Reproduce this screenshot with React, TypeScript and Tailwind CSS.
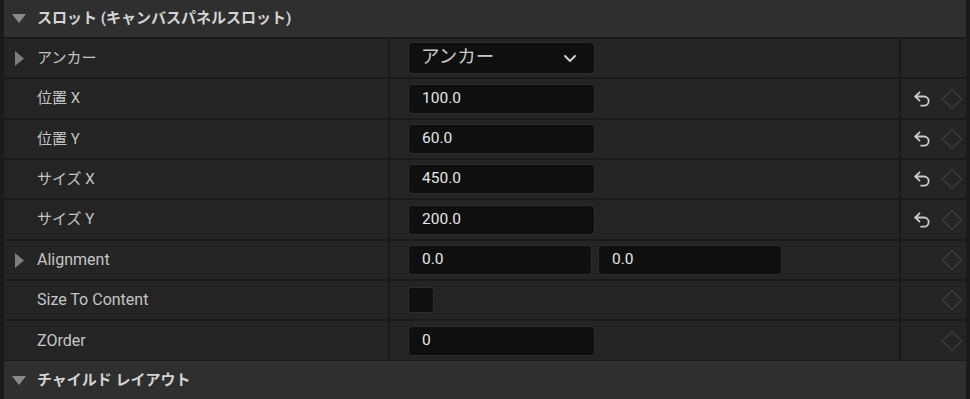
import React from "react";

const font = { fontFamily: "Roboto, 'Noto Sans CJK JP', sans-serif" };

function Undo() {
  return (
    <svg width="20" height="20" viewBox="0 0 24 24" fill="none" stroke="#c9c9c9" strokeWidth="2.2" strokeLinecap="round" strokeLinejoin="round">
      <path d="M9 14 4 9l5-5" />
      <path d="M4 9h10.5a5.5 5.5 0 0 1 5.5 5.5a5.5 5.5 0 0 1-5.5 5.5H11" />
    </svg>
  );
}

function Diamond() {
  return (
    <svg width="22" height="22" viewBox="0 0 22 22" fill="none">
      <path d="M11 1.5 20.5 11 11 20.5 1.5 11Z" stroke="#3b3b3b" strokeWidth="1.4" />
    </svg>
  );
}

function TriRight() {
  return (
    <svg width="10" height="15" viewBox="0 0 10 15">
      <path d="M0 0 L9 7.5 L0 15 Z" fill="#7d7d7d" />
    </svg>
  );
}

function TriDown() {
  return (
    <svg width="14" height="9" viewBox="0 0 14 9">
      <path d="M0 0 L14 0 L7 9 Z" fill="#8a8a8a" />
    </svg>
  );
}

function Input({ value, w = "w-[187px]" }: { value: string; w?: string }) {
  return (
    <div className={`${w} h-[30px] rounded-[4px] bg-[#0f0f0f] border border-[#2c2c2c] flex items-center pl-[13px] text-[15.5px] text-[#e6e6e6]`}>
      {value}
    </div>
  );
}

type Row = {
  label: string;
  size: string;
  h: string;
  expand?: boolean;
  value: React.ReactNode;
  undo?: boolean;
  diamond?: boolean;
};

export default function App() {
  const rows: Row[] = [
    {
      label: "アンカー",
      size: "text-[15px]",
      h: "h-[38px]",
      expand: true,
      value: (
        <div className="w-[187px] h-[32px] rounded-[5px] bg-[#0f0f0f] border border-[#2c2c2c] flex items-center justify-between pl-[12px] pr-[17px] text-[18.5px] text-[#c8c8c8]">
          <span>アンカー</span>
          <svg width="14" height="9" viewBox="0 0 14 9" fill="none" stroke="#cfcfcf" strokeWidth="2" strokeLinecap="round" strokeLinejoin="round">
            <path d="M2 2 7 7 12 2" />
          </svg>
        </div>
      ),
    },
    { label: "位置 X", size: "text-[15px]", h: "h-[39px]", value: <Input value="100.0" />, undo: true, diamond: true },
    { label: "位置 Y", size: "text-[15px]", h: "h-[38px]", value: <Input value="60.0" />, undo: true, diamond: true },
    { label: "サイズ X", size: "text-[15px]", h: "h-[38px]", value: <Input value="450.0" />, undo: true, diamond: true },
    { label: "サイズ Y", size: "text-[15px]", h: "h-[39px]", value: <Input value="200.0" />, undo: true, diamond: true },
    {
      label: "Alignment",
      size: "text-[16px]",
      h: "h-[38px]",
      expand: true,
      value: (
        <div className="flex gap-[6px]">
          <Input value="0.0" w="w-[184px]" />
          <Input value="0.0" w="w-[184px]" />
        </div>
      ),
      diamond: true,
    },
    {
      label: "Size To Content",
      size: "text-[16px]",
      h: "h-[38px]",
      value: <div className="w-[26px] h-[26px] rounded-[3px] bg-[#0f0f0f] border border-[#2c2c2c]" />,
      diamond: true,
    },
    { label: "ZOrder", size: "text-[16px]", h: "h-[39px]", value: <Input value="0" />, diamond: true },
  ];

  return (
    <div className="w-[970px] h-[399px] bg-[#1a1a1a] flex flex-col pl-[4px] pr-[4px] overflow-hidden" style={font}>
      <div className="h-[37px] bg-[#2f2f2f] flex items-center shrink-0 mb-[2px]">
        <div className="w-[33px] flex justify-start pl-[8px]">
          <TriDown />
        </div>
        <span className="text-[15px] font-bold text-[#d4d4d4]">スロット (キャンバスパネルスロット)</span>
      </div>
      {rows.map((r, i) => (
        <div key={i} className={`${r.h} flex shrink-0 mb-[2px]`}>
          <div className="w-[384px] bg-[#242424] flex items-center">
            <div className="w-[33px] flex justify-start pl-[11px]">{r.expand ? <TriRight /> : null}</div>
            <span className={`${r.size} text-[#c4c4c4]`}>{r.label}</span>
          </div>
          <div className="w-[509px] ml-[2px] bg-[#242424] flex items-center pl-[18px]">{r.value}</div>
          <div className="flex-1 ml-[2px] bg-[#242424] flex items-center">
            <div className="w-[40px] flex justify-center pl-[2px]">{r.undo ? <Undo /> : null}</div>
            <div className="w-[22px] flex justify-center">{r.diamond ? <Diamond /> : null}</div>
          </div>
        </div>
      ))}
      <div className="flex-1 bg-[#2f2f2f] flex items-center -mt-[1px]">
        <div className="w-[33px] flex justify-start pl-[8px]">
          <TriDown />
        </div>
        <span className="text-[15px] font-bold text-[#d4d4d4]">チャイルド レイアウト</span>
      </div>
    </div>
  );
}
